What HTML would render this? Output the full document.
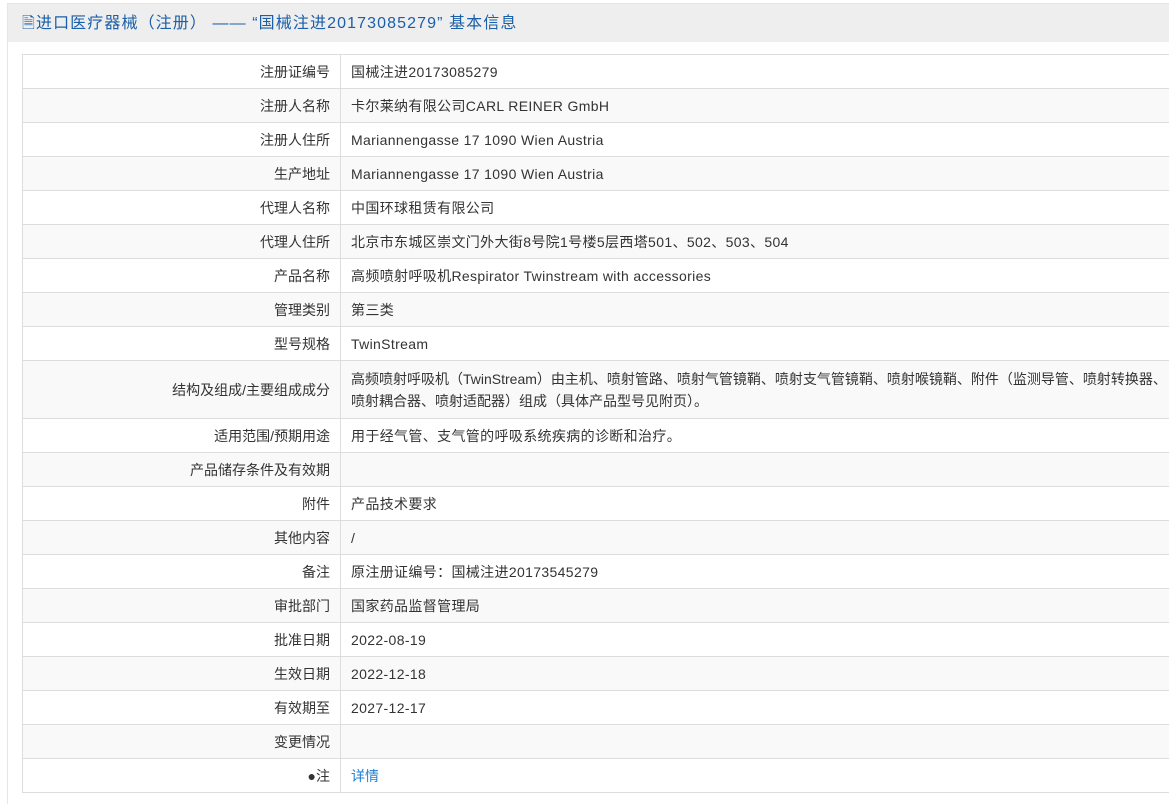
<!DOCTYPE html>
<html><head><meta charset="utf-8">
<style>
html,body{margin:0;padding:0;background:#fff;width:1169px;height:773px;overflow:hidden;font-family:"Liberation Sans","Noto Sans CJK SC",sans-serif;}
.panel{position:absolute;left:7px;top:3px;width:1170px;height:800px;border-left:1px solid #e6e6e6;border-top:1px solid #e6e6e6;}
.hd{height:38px;background:#eeeeee;color:#1a5fa8;font-size:16px;line-height:40px;padding-left:14px;letter-spacing:1.1px;white-space:nowrap;}
table{position:absolute;left:14px;top:50px;border-collapse:collapse;width:1160px;font-size:14px;color:#333;}
td{border:1px solid #ddd;height:33px;padding:0 10px;line-height:22px;}
td.l{width:297px;text-align:right;}
td.v{letter-spacing:0.35px;}
tr:nth-child(even) td{background:#f9f9f9;}
a{color:#1e7ed6;text-decoration:none;}
</style></head><body>
<div class="panel">
<div class="hd">&#128462;进口医疗器械（注册） —— “国械注进20173085279” 基本信息</div>
<table>
<tr><td class="l">注册证编号</td><td class="v">国械注进20173085279</td></tr>
<tr><td class="l">注册人名称</td><td class="v">卡尔莱纳有限公司CARL REINER GmbH</td></tr>
<tr><td class="l">注册人住所</td><td class="v">Mariannengasse 17 1090 Wien Austria</td></tr>
<tr><td class="l">生产地址</td><td class="v">Mariannengasse 17 1090 Wien Austria</td></tr>
<tr><td class="l">代理人名称</td><td class="v">中国环球租赁有限公司</td></tr>
<tr><td class="l">代理人住所</td><td class="v">北京市东城区崇文门外大街8号院1号楼5层西塔501、502、503、504</td></tr>
<tr><td class="l">产品名称</td><td class="v">高频喷射呼吸机Respirator Twinstream with accessories</td></tr>
<tr><td class="l">管理类别</td><td class="v">第三类</td></tr>
<tr><td class="l">型号规格</td><td class="v">TwinStream</td></tr>
<tr><td class="l" style="height:57px">结构及组成/主要组成成分</td><td style="white-space:nowrap">高频喷射呼吸机（TwinStream）由主机、喷射管路、喷射气管镜鞘、喷射支气管镜鞘、喷射喉镜鞘、附件（监测导管、喷射转换器、<br>喷射耦合器、喷射适配器）组成（具体产品型号见附页）。</td></tr>
<tr><td class="l">适用范围/预期用途</td><td class="v">用于经气管、支气管的呼吸系统疾病的诊断和治疗。</td></tr>
<tr><td class="l">产品储存条件及有效期</td><td></td></tr>
<tr><td class="l">附件</td><td class="v">产品技术要求</td></tr>
<tr><td class="l">其他内容</td><td class="v">/</td></tr>
<tr><td class="l">备注</td><td class="v">原注册证编号：国械注进20173545279</td></tr>
<tr><td class="l">审批部门</td><td class="v">国家药品监督管理局</td></tr>
<tr><td class="l">批准日期</td><td class="v">2022-08-19</td></tr>
<tr><td class="l">生效日期</td><td class="v">2022-12-18</td></tr>
<tr><td class="l">有效期至</td><td class="v">2027-12-17</td></tr>
<tr><td class="l">变更情况</td><td></td></tr>
<tr><td class="l">&#9679;注</td><td><a>详情</a></td></tr>
</table>
</div>
</body></html>
